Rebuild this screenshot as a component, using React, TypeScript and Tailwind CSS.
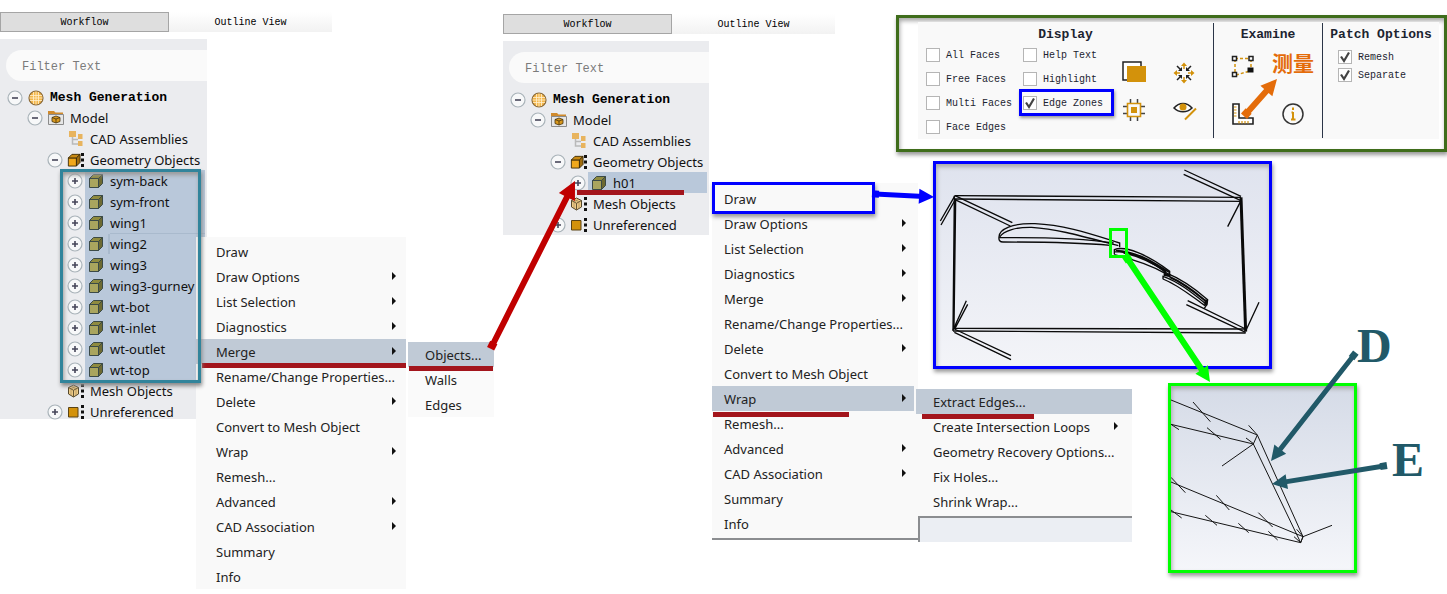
import { ReactNode } from 'react'
import clsx from 'clsx'

type IconName = 'mesh' | 'model' | 'assembly' | 'geometry' | 'cube' | 'meshObjects' | 'unreferenced'

type TreeNode = { label: string; level: number; icon: IconName; toggle?: '+' | '-'; focused?: boolean }

type MenuEntry = { label: string; more?: boolean; active?: boolean; mark?: ReactNode }

const MONO = "font-['Liberation_Mono',monospace]"
const SANS = "font-['Noto_Sans',sans-serif]"

const HEAD: TreeNode[] = [
  { label: 'Mesh Generation',  level: 0, icon: 'mesh',     toggle: '-' },
  { label: 'Model',            level: 1, icon: 'model',    toggle: '-' },
  { label: 'CAD Assemblies',   level: 2, icon: 'assembly' },
  { label: 'Geometry Objects', level: 2, icon: 'geometry', toggle: '-' },
]

const PARTS = [
  'sym-back', 'sym-front', 'wing1', 'wing2', 'wing3',
  'wing3-gurney', 'wt-bot', 'wt-inlet', 'wt-outlet', 'wt-top',
]

const TAIL: TreeNode[] = [
  { label: 'Mesh Objects', level: 2, icon: 'meshObjects' },
  { label: 'Unreferenced', level: 2, icon: 'unreferenced', toggle: '+' },
]

const INDENT = ['pl-[7px] pt-0.5', 'pl-[27px]', 'pl-[47px]', 'pl-[67px]']

function Cube({ face, top, side, line }: { face: string; top: string; side: string; line: string }) {
  return (
    <g stroke={line} strokeWidth="1" strokeLinejoin="round">
      <path d="M1.5 5.5h9v9h-9z" fill={face} />
      <path d="M1.5 5.5l4-4h9l-4 4z" fill={top} />
      <path d="M10.5 5.5l4-4v9l-4 4z" fill={side} />
    </g>
  )
}

function Dots() {
  return <path d="M13 1h3v3h-3zM13 6.500h3v3h-3zM13 12h3v3h-3z" fill="#111" />
}

function TreeIcon({ name }: { name: IconName }) {
  return (
    <svg viewBox="0 0 16 16" className="size-4 shrink-0 overflow-visible">
      {name === 'mesh' && (
        <>
          <circle cx="8" cy="8" r="7" fill="#f3b64a" stroke="#8a6a3a" strokeWidth="1.2" />
          <path d="M5.500 2v12M8 1.500v13M10.500 2v12M2 5.500h12M1.500 8h13M2 10.500h12" stroke="#fff0cf" strokeWidth=".8" />
        </>
      )}
      {name === 'model' && (
        <>
          <path d="M0 5V1h6l1.500 1.500H15V5z" fill="#d08a2c" />
          <path d="M.5 4.500h15v10H.5z" fill="#e6e6e6" stroke="#8b8b8b" />
          <path d="M4 7.500l4-1.500 4 1.500v4L8 13l-4-1.500z" fill="#d9981d" stroke="#47330d" strokeWidth=".8" />
          <path d="M4 7.500l4 1.500 4-1.500M8 9v4" fill="none" stroke="#47330d" strokeWidth=".8" />
        </>
      )}
      {name === 'assembly' && (
        <>
          <path d="M1 0h7v6H1zM10 3h4.500v5H10zM10 10h4.500v5H10z" fill="#e8b45e" />
          <path d="M4.500 6v7H10M4.500 8.500H10" fill="none" stroke="#b9b9b9" strokeWidth="1.500" />
        </>
      )}
      {name === 'geometry' && (
        <>
          <g transform="translate(-1 1) scale(.9)">
            <Cube face="#f0a81c" top="#c98a14" side="#a06c0d" line="#3a2a08" />
          </g>
          <Dots />
        </>
      )}
      {name === 'cube' && <Cube face="#a9a55e" top="#8f8b3f" side="#6d6a32" line="#3b4a47" />}
      {name === 'meshObjects' && (
        <>
          <path d="M5.500 2l5 2.500v6.500l-5 3-5-3V4.500z" fill="#edca86" stroke="#55482c" />
          <path d="M.5 4.500l5 2.800 5-2.800M5.500 7.300v6.500" fill="none" stroke="#55482c" strokeWidth=".9" />
          <path d="M3 3.300l5 2.600v6.500M8 3.300L3 5.900v6.500" fill="none" stroke="#8c7748" strokeWidth=".5" />
          <Dots />
        </>
      )}
      {name === 'unreferenced' && (
        <>
          <path d="M.5 3.500h9.500v9.500H.5z" fill="#d3920b" stroke="#5a4314" />
          <Dots />
        </>
      )}
    </svg>
  )
}

function TreeRow({ node, selected }: { node: TreeNode; selected?: boolean }) {
  return (
    <li className={clsx('flex h-[21px] items-center', INDENT[node.level])}>
      {node.toggle ? (
        <button aria-label={`Toggle ${node.label}`} className="size-4 shrink-0">
          <svg viewBox="0 0 16 16" className="size-4">
            <circle cx="8" cy="8" r="7" fill="#f7f8f9" stroke="#a9b3b9" strokeWidth="1.200" />
            <path d={node.toggle === '+' ? 'M5 8h6M8 5v6' : 'M5 8h6'} stroke="#46465a" strokeWidth="1.600" />
          </svg>
        </button>
      ) : (
        <span className="size-4 shrink-0" />
      )}
      <span className={clsx('mr-0.5 ml-0.5 flex h-full flex-1 items-center gap-1.5 pl-[3px]', selected && 'bg-[#b9c8da]')}>
        <TreeIcon name={node.icon} />
        <span
          className={clsx(
            'leading-5 whitespace-nowrap',
            node.level === 0 ? `${MONO} text-[13px] font-bold text-black` : 'text-[13px] text-[#111]',
            node.focused && 'flex-1 shadow-[-2px_0_0_#a9bacd,0_-1px_0_#a9bacd,0_1px_0_#a9bacd]',
          )}
        >
          {node.label}
        </span>
      </span>
    </li>
  )
}

function Tabs() {
  return (
    <nav className={`${MONO} flex h-5 text-[10px] text-black`}>
      <button className="w-[169px] border border-[#a5a5a5] bg-[#dedede]">Workflow</button>
      <button className="w-[163px] bg-gradient-to-b from-white to-[#f2f2f2]">Outline View</button>
    </nav>
  )
}

function Filter({ id }: { id: string }) {
  return (
    <div className="pt-[11px] pb-[5px] pl-1.5">
      <input
        id={id}
        aria-label="Filter Text"
        placeholder="Filter Text"
        className={`${MONO} block h-[31px] w-full rounded-l-full bg-[#fafafa] pt-0.5 pl-4 text-[12px] outline-none placeholder:text-[#7b7b7b]`}
      />
    </div>
  )
}

function Menu({ items, pad, arrowPad }: { items: MenuEntry[]; pad: string; arrowPad: string }) {
  return (
    <ul className="text-[13px] text-[#222]">
      {items.map(({ label, more, active, mark }) => (
        <li key={label} className="relative">
          <button
            className={clsx('flex h-[25px] w-full items-center justify-between pt-0.5 text-left whitespace-nowrap', pad, arrowPad, active && 'bg-[#c0cad6]')}
          >
            {label}
            {more && (
              <svg viewBox="0 0 4 8" className="mb-1 h-2 w-1 shrink-0">
                <path d="M0 0l4 4-4 4z" fill="#111" />
              </svg>
            )}
          </button>
          {mark}
        </li>
      ))}
    </ul>
  )
}

const contextMenu = (active: string, marks: Record<string, ReactNode>): MenuEntry[] =>
  [
    { label: 'Draw' },
    { label: 'Draw Options', more: true },
    { label: 'List Selection', more: true },
    { label: 'Diagnostics', more: true },
    { label: 'Merge', more: true },
    { label: 'Rename/Change Properties...' },
    { label: 'Delete', more: true },
    { label: 'Convert to Mesh Object' },
    { label: 'Wrap', more: true },
    { label: 'Remesh...' },
    { label: 'Advanced', more: true },
    { label: 'CAD Association', more: true },
    { label: 'Summary' },
    { label: 'Info' },
  ].map((item) => ({ ...item, active: item.label === active, mark: marks[item.label] }))

function Underline({ className }: { className: string }) {
  return <span className={clsx('pointer-events-none absolute z-10 h-[5px] bg-[#a3151c]', className)} />
}

function Check({ label, checked }: { label: string; checked?: boolean }) {
  return (
    <label className="flex items-center gap-1.5 whitespace-nowrap">
      <span className="relative size-3.5 shrink-0">
        <input
          type="checkbox"
          defaultChecked={checked}
          className="peer block size-3.5 appearance-none border border-[#b5b5b5] bg-white"
        />
        <svg viewBox="0 0 14 14" className="pointer-events-none absolute inset-0 hidden peer-checked:block">
          <path d="M3 6.500l3 4.500 5-8.500" fill="none" stroke="#444" strokeWidth="2.200" />
        </svg>
      </span>
      {label}
    </label>
  )
}

function ToolIcon({ label, children }: { label: string; children: ReactNode }) {
  return (
    <button aria-label={label} className="size-6">
      <svg viewBox="0 0 24 24" fill="none" className="size-6 overflow-visible">
        {children}
      </svg>
    </button>
  )
}

function Toolbar() {
  return (
    <div className="border-3 border-[#3f6d1b] bg-white pt-1 pr-[5px] pb-2.5 pl-[19px] shadow-[1px_3px_4px_#999,inset_1px_3px_4px_#aaa]">
      <div className={`${MONO} flex bg-[#f9f9f9] text-[10px] text-[#1c2430]`}>
        <section className="flex-1">
          <h2 className="pt-[5px] text-center text-[13px] leading-4 font-bold">Display</h2>
          <div className="flex pl-2">
            <div className="grid grid-cols-[97px_97px] grid-rows-[repeat(4,24px)]">
              <Check label="All Faces" />
              <Check label="Help Text" />
              <Check label="Free Faces" />
              <Check label="Highlight" />
              <Check label="Multi Faces" />
              <div className="relative flex">
                <Check label="Edge Zones" checked />
                <span className="pointer-events-none absolute -top-0.5 -left-1 h-[27px] w-[95px] border-3 border-[#0000ff] shadow-[1px_2px_3px_#999]" />
              </div>
              <Check label="Face Edges" />
            </div>
            <div className="ml-0.5 grid grid-cols-[24px_24px] content-center gap-x-[26px] gap-y-[13px]">
              <ToolIcon label="Show faces">
                <path d="M1 1h18v18H1z" fill="#fff" stroke="#222" strokeWidth="1.500" />
                <path d="M5 5h19v16H5z" fill="#d3920b" />
              </ToolIcon>
              <ToolIcon label="Fit">
                <path d="M12 3v5M12 16v5M3 12h5M16 12h5" stroke="#d3920b" strokeWidth="1.500" />
                <path d="M9 5l3-3.500L15 5zM9 19l3 3.500 3-3.500zM5 9l-3.500 3L5 15zM19 9l3.500 3-3.500 3z" fill="#d3920b" />
                <path d="M5 5l4 4M19 5l-4 4M5 19l4-4M19 19l-4-4" stroke="#222" strokeWidth="1.500" />
                <path d="M10 6v4H6zM14 6v4h4zM10 18v-4H6zM14 18v-4h4z" fill="#222" />
              </ToolIcon>
              <ToolIcon label="Isolate">
                <path d="M8.500 1v5M15.500 1v5M8.500 18v5M15.500 18v5M1 8.500h5M1 15.500h5M18 8.500h5M18 15.500h5" stroke="#444" strokeWidth="1.500" />
                <path d="M5.500 5.500h13v13h-13z" stroke="#d3920b" strokeWidth="1.600" />
                <path d="M9 9h6v6H9z" fill="#d3920b" />
              </ToolIcon>
              <ToolIcon label="Hide">
                <path d="M2 10c5-6 13-6 18 0-5 5-13 5-18 0z" fill="#fff" stroke="#222" strokeWidth="1.500" />
                <circle cx="11" cy="9" r="3.500" fill="#d3920b" />
                <path d="M13 21.500L24 10.500" stroke="#d3920b" strokeWidth="2" />
              </ToolIcon>
            </div>
          </div>
        </section>

        <section className="my-px w-[109px] border-l border-[#2b3547]">
          <h2 className="pt-1 text-center text-[13px] leading-4 font-bold">Examine</h2>
          <div className="mt-3 grid grid-cols-[24px_24px] justify-center gap-x-[26px] gap-y-[23px]">
            <ToolIcon label="Select">
              <path d="M4 3.500h14M4 4v14M20 4v13M5 20l14-4" stroke="#d3920b" strokeWidth="1.500" strokeDasharray="3 2" />
              <path d="M1.500 1.500h4v4h-4zM18 1.500h4v4h-4zM1.500 17.500h4v4h-4z" fill="#fff" stroke="#222" strokeWidth="1.500" />
              <path d="M16.500 12.500h6v5h-6z" fill="#111" />
            </ToolIcon>
            <span className="flex items-center justify-center font-['Noto_Sans_CJK_SC',sans-serif] text-[21px] leading-6 font-bold whitespace-nowrap text-[#e46c0a]">
              <span className="-mx-3 -mt-2.5">测量</span>
            </span>
            <ToolIcon label="Measure">
              <path d="M2 2h6v14h14v6H2z" fill="#fff" stroke="#222" strokeWidth="1.600" />
              <path d="M3 5h2.500M3 8h2.500M3 11h2.500M3 14h2.500M8 21.500V19M11 21.500V19M14 21.500V19M17 21.500V19" stroke="#d3920b" strokeWidth="1.200" />
            </ToolIcon>
            <ToolIcon label="Info">
              <circle cx="12" cy="12" r="10" stroke="#333" strokeWidth="1.500" />
              <path d="M12 5.500v2.500M12 10v7M10.500 10.500H12M10 17.500h4.500" stroke="#d3920b" strokeWidth="2" />
            </ToolIcon>
          </div>
        </section>

        <section className="my-px w-[117px] border-l border-[#2b3547]">
          <h2 className="pt-1 text-center text-[13px] leading-4 font-bold">Patch Options</h2>
          <div className="mt-[5px] grid auto-rows-[18px] pl-[15px]">
            <Check label="Remesh" checked />
            <Check label="Separate" checked />
          </div>
        </section>
      </div>
    </div>
  )
}

function WingView() {
  return (
    <div className="h-[208px] w-[339px] border-3 border-[#0000ff] bg-gradient-to-b from-[#dfe3ee] to-[#f3f4f8] shadow-[1px_3px_4px_#999,inset_1px_3px_4px_#aaa]">
      <svg viewBox="33 27 999 606" fill="none" stroke="#0a0a0a" strokeWidth="4" className="size-full">
        <path d="M90 122L948 127M90 132L948 139M84 520L962 522M84 528L962 534" />
        <path d="M88 122L84 528M92 132L87 518" />
        <path d="M948 127L962 530" strokeWidth="9" />
        <path d="M778 45L948 124M776 58L948 137M90 122L262 203M90 134L256 213" />
        <path d="M90 122L46 198M92 132L48 210M948 137L908 215" />
        <path d="M84 525L124 437M90 520L128 448M88 522L258 602M88 532L258 614" />
        <path d="M962 522L788 437M962 532L784 449M962 528L1002 442" />
        {/* main element */}
        <path d="M222 246C222 222 262 204 330 206C420 210 500 238 584 264V277" />
        <path d="M224 246C236 226 276 216 320 217C400 222 480 246 580 272" />
        <path d="M222 246Q220 261 234 261C340 261 450 262 556 271M224 248C320 247 460 248 566 264" />
        {/* flaps */}
        <path d="M568 298V284C600 270 670 300 734 349V362M568 290C630 290 690 326 730 358M572 286C640 288 700 330 732 352M568 299C620 312 670 326 722 356" />
        <path d="M596 293C650 304 700 334 724 350" strokeWidth="6" />
        <path d="M714 373V364C760 380 800 412 842 446M714 372C760 390 800 424 840 452M728 356C780 376 820 410 848 434L846 448L838 460" />
        <path d="M734 366C780 386 810 412 842 438" strokeWidth="6" />
        <path d="M716 358l20 4M844 434l-2 18" strokeWidth="9" />
      </svg>
    </div>
  )
}

function EdgeDetail() {
  return (
    <div className="h-[190px] w-[189px] border-3 border-[#00ff00] bg-gradient-to-b from-[#d5dbe7] to-[#f5f6fa] shadow-[1px_3px_4px_#999,inset_1px_3px_4px_#aaa]">
      <svg viewBox="33 198 549 552" fill="none" stroke="#151515" strokeWidth="3" className="size-full">
        <path d="M33 240L292 345M33 313L280 372M292 345L280 372M292 345L429 650L422 668M280 372L422 668" />
        <path d="M33 486L429 650M33 575L422 668M429 650L516 616M280 372L186 438" />
        <path d="M99 246L151 305M141 323L182 358M266 316L292 345M258 354L282 372" />
        <path d="M33 472L76 518M169 526L208 570M295 578L338 621M136 586L171 616M235 610L266 638M325 634L353 660" />
        <path d="M33 313l24 16M33 570l32 24M410 628l19 22-7 18-20-18" />
      </svg>
    </div>
  )
}

type ArrowProps = { from: [number, number]; to: [number, number]; width: number; head: number; color: string }

// straight block arrow; the tail is squared off and a little wider than the shaft
function Arrow({ from, to, width, head, color }: ArrowProps) {
  const dx = to[0] - from[0]
  const dy = to[1] - from[1]
  const len = Math.hypot(dx, dy)
  const angle = (Math.atan2(dy, dx) * 180) / Math.PI
  const w = width / 2
  const h = head / 2
  return (
    <g transform={`translate(${from[0]} ${from[1]}) rotate(${angle})`} fill={color}>
      <path d={`M0 ${-w}H${len - head}V${-h}L${len} 0L${len - head} ${h}V${w}H0z`} />
      <path d={`M-3 ${-w - 1}H4V${w + 1}H-3z`} />
    </g>
  )
}

export default function App() {
  return (
    <main className={`${SANS} relative flex min-h-[594px] items-start overflow-hidden bg-white`}>
      <section className="relative w-[503px] shrink-0 pt-3">
        <Tabs />
        <div className="mt-[7px] h-[380px] w-[207px] bg-[#ebecef]">
          <Filter id="filter-parts" />
          <ul>
            {HEAD.map((node) => <TreeRow key={node.label} node={node} />)}
          </ul>
          <div className="relative">
            <ul>
              {PARTS.map((label) => (
                <TreeRow key={label} selected node={{ label, level: 3, icon: 'cube', toggle: '+', focused: label === 'wing2' }} />
              ))}
            </ul>
            <span className="pointer-events-none absolute -top-px left-[60px] z-20 h-[214px] w-[141px] border-3 border-[#31849b] shadow-[1px_3px_4px_#888,inset_1px_3px_4px_#999]" />
          </div>
          <ul>
            {TAIL.map((node) => <TreeRow key={node.label} node={node} />)}
          </ul>
        </div>

        <div className="absolute top-[237px] left-[196px] z-10 w-[210px] bg-[#f9f9f9] pt-0.5">
          <Menu
            pad="pl-5"
            arrowPad="pr-2.5"
            items={contextMenu('Merge', { Merge: <Underline className="top-6 right-0 left-1.5" /> })}
          />
        </div>
        <div className="absolute top-[342px] left-[408px] z-10 w-[86px] bg-[#fafafa]">
          <Menu
            pad="pl-[17px]"
            arrowPad="pr-2"
            items={[
              { label: 'Objects...', active: true, mark: <Underline className="inset-x-px top-6" /> },
              { label: 'Walls' },
              { label: 'Edges' },
            ]}
          />
        </div>
      </section>

      <section className="relative w-[393px] shrink-0 pt-3.5">
        <Tabs />
        <div className="mt-[7px] w-[206px] bg-[#ebecef]">
          <Filter id="filter-merged" />
          <ul>
            {HEAD.map((node) => <TreeRow key={node.label} node={node} />)}
          </ul>
          <div className="relative">
            <ul>
              <TreeRow selected node={{ label: 'h01', level: 3, icon: 'cube', toggle: '+' }} />
            </ul>
            <Underline className="top-[18px] left-[74px] w-[107px]" />
          </div>
          <ul>
            {TAIL.map((node) => <TreeRow key={node.label} node={node} />)}
          </ul>
        </div>

        <div className="absolute top-[183px] left-[209px] z-10 w-[206px] border-b-2 border-[#8b8d90] bg-[#f9f9f9] pt-[3px] pr-1 pb-0.5">
          <Menu
            pad="pl-3"
            arrowPad="pr-2"
            items={contextMenu('Wrap', {
              Draw: <span className="pointer-events-none absolute -top-1 left-0 z-10 h-8 w-[163px] border-3 border-[#0000ff] shadow-[1px_3px_4px_#999]" />,
              Wrap: <Underline className="top-[26px] left-px w-[136px]" />,
            })}
          />
        </div>
        <div className="absolute top-[389px] left-[413px] z-10 w-[216px]">
          <div className="bg-[#f9f9f9] pb-0.5">
            <Menu
              pad="pl-[17px]"
              arrowPad="pr-3.5"
              items={[
                { label: 'Extract Edges...', active: true, mark: <Underline className="top-[25px] left-1.5 w-28" /> },
                { label: 'Create Intersection Loops', more: true },
                { label: 'Geometry Recovery Options...' },
                { label: 'Fix Holes...' },
                { label: 'Shrink Wrap...' },
              ]}
            />
          </div>
          <div className="ml-0.5 h-[26px] border-t-2 border-l-2 border-[#8b8d90] bg-[#ebeef3]" />
        </div>
      </section>

      <section className="min-w-[551px] flex-1 pt-[15px]">
        <Toolbar />
        <div className="mt-[9px] pl-[37px]">
          <WingView />
        </div>
        <div className="relative mt-3.5 pl-[272px]">
          <EdgeDetail />
          <span className="absolute -top-[61px] left-[461px] font-['Liberation_Serif',serif] text-5xl leading-none font-bold text-[#215968]">D</span>
          <span className="absolute top-[53px] left-[496px] font-['Liberation_Serif',serif] text-5xl leading-none font-bold text-[#215968]">E</span>
        </div>
      </section>

      <svg viewBox="0 0 1447 594" className="pointer-events-none absolute top-0 left-0 z-30 h-[594px] w-[1447px]">
        <Arrow from={[492, 346]} to={[575, 181]} width={6} head={18} color="#c00000" />
        <Arrow from={[875, 194]} to={[934, 197]} width={5} head={15} color="#0000ff" />
        <rect x="1110.500" y="229.500" width="16" height="27" fill="none" stroke="#00ff00" strokeWidth="3" />
        <Arrow from={[1127, 258]} to={[1210, 382]} width={6} head={15} color="#00ff00" />
        <Arrow from={[1246, 114]} to={[1277, 79]} width={6} head={16} color="#e46c0a" />
        <Arrow from={[1354, 355]} to={[1271, 461]} width={5} head={15} color="#215968" />
        <Arrow from={[1384, 466]} to={[1272, 484]} width={5} head={15} color="#215968" />
      </svg>
    </main>
  )
}
